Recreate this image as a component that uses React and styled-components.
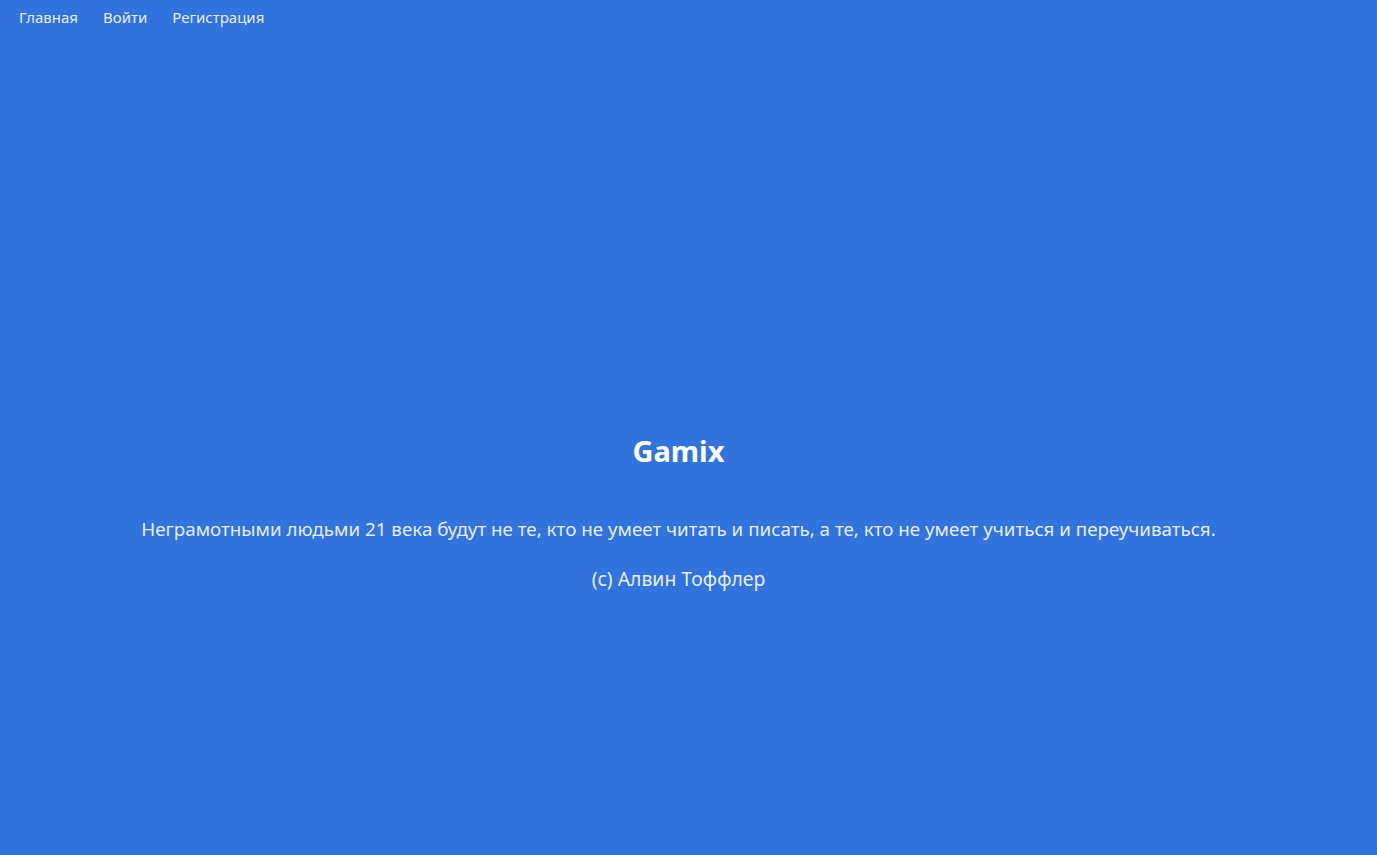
import React from "react";
import styled, { createGlobalStyle } from "styled-components";

// ------------ Variables -------------------
const color_bg = "#3373dd";
const color_text = "rgba(255, 255, 255, 0.9)";
// ----- end of Variables -------------------

const GlobalStyle = createGlobalStyle`
  html, body, #root {
    margin: 0;
    padding: 0;
    height: 100%;
  }
  body {
    background-color: ${color_bg};
    font-family: "Noto Sans", "Open Sans", sans-serif;
    color: ${color_text};
  }
`;

// --------------- Styles -------------------
const Page = styled.div`
  box-sizing: border-box;
  display: flex;
  flex-direction: column;
  height: 100vh;
  background-color: ${color_bg};
`;

const Nav = styled.nav`
  display: flex;
  gap: 25px;
  padding: 6px 19px;
  height: 23px;
`;

const NavLink = styled.a`
  font-size: 15px;
  line-height: 23px;
  color: ${color_text};
  text-decoration: none;
`;

const Hero = styled.main`
  display: flex;
  flex-direction: column;
  align-items: center;
  padding: 396px 20px 0 0;
  text-align: center;
`;

const Title = styled.h1`
  margin: 0;
  font-size: 29px;
  line-height: 40px;
  font-weight: 700;
  color: #ffffff;
`;

const Quote = styled.p`
  margin: 45px 0 0;
  font-size: 18.8px;
  line-height: 27px;
`;

const Author = styled.p`
  margin: 22px 0 0;
  font-size: 19.4px;
  line-height: 27px;
`;
// -------- end of Styles -------------------

export default function App() {
  return (
    <Page>
      <GlobalStyle />
      <Nav>
        <NavLink href="#">Главная</NavLink>
        <NavLink href="#">Войти</NavLink>
        <NavLink href="#">Регистрация</NavLink>
      </Nav>
      <Hero>
        <Title>Gamix</Title>
        <Quote>
          Неграмотными людьми 21 века будут не те, кто не умеет читать и писать, а те, кто не умеет учиться и переучиваться.
        </Quote>
        <Author>(c) Алвин Тоффлер</Author>
      </Hero>
    </Page>
  );
}
